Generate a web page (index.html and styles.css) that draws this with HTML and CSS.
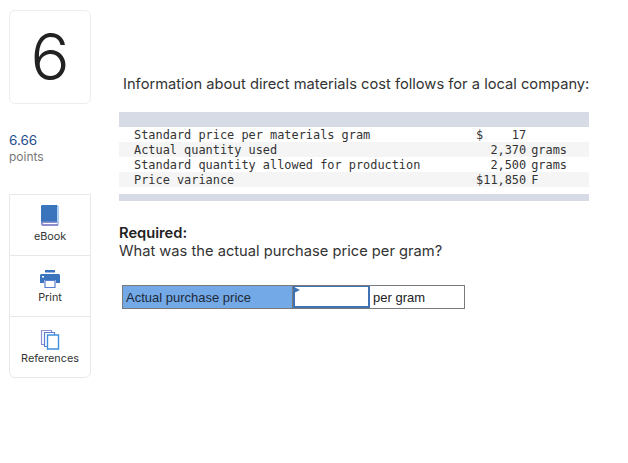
FILE: index.html
```html
<!DOCTYPE html>
<html lang="en">
<head>
  <meta charset="UTF-8" />
  <title>Question 6</title>
  <link rel="stylesheet" href="styles.css">
</head>
<body>
  <div class="page">
    <aside class="sidebar">
      <div class="question-number">6</div>
      <div class="score">
        <div class="score-value">6.66</div>
        <div class="score-label">points</div>
      </div>
      <div class="tools">
        <div class="tool">
          <svg class="tool-icon" width="22" height="24" viewBox="0 0 22 24">
            <path d="M3 2h16v19H3z" fill="#fff" stroke="#5aa5e8" stroke-width="1"/>
            <path d="M2 2.500C2 1.500 2.500 1 3.500 1H18v17H4c-1.200 0-2 .4-2 1z" fill="#3a74bd"/>
            <path d="M2 19c0-1 .8-1.500 2-1.500h14.500V19H4.500c-.8 0-.8 1 0 1H19v2H4c-1.300 0-2-1-2-2z" fill="#8f8fd0"/>
          </svg>
          <span>eBook</span>
        </div>
        <div class="tool">
          <svg class="tool-icon" width="22" height="20" viewBox="0 0 22 20">
            <path d="M6 1h10v2.500H6z" fill="#3a74bd"/>
            <path d="M2.500 5h17c.8 0 1.500.7 1.500 1.500V14h-4v-3H5v3H1V6.500C1 5.700 1.700 5 2.500 5z" fill="#3a74bd"/>
            <path d="M3 7h2v1.500H3z" fill="#fff"/>
            <path d="M6 11.500h10v7H6z" fill="#fff" stroke="#5b7fd0" stroke-width="1.200"/>
          </svg>
          <span>Print</span>
        </div>
        <div class="tool">
          <svg class="tool-icon" width="20" height="21" viewBox="0 0 20 21">
            <path d="M1.500 1.500h10v14h-10z" fill="#fff" stroke="#8f8fd0" stroke-width="1.200"/>
            <path d="M4.500 3.500h10v14h-10z" fill="#fff" stroke="#5b7fd0" stroke-width="1.200"/>
            <path d="M7.500 6h11v14h-11z" fill="#fff" stroke="#3f8fdc" stroke-width="1.400"/>
          </svg>
          <span>References</span>
        </div>
      </div>
    </aside>

    <main class="question">
      <p class="intro">Information about direct materials cost follows for a local company:</p>

      <table class="data-table">
        <tr class="band"><td colspan="4"></td></tr>
        <tr><td class="item">Standard price per materials gram</td><td class="cur">$</td><td class="num">17</td><td class="unit"></td></tr>
        <tr class="alt"><td class="item">Actual quantity used</td><td class="cur"></td><td class="num">2,370</td><td class="unit">grams</td></tr>
        <tr><td class="item">Standard quantity allowed for production</td><td class="cur"></td><td class="num">2,500</td><td class="unit">grams</td></tr>
        <tr class="alt"><td class="item">Price variance</td><td class="cur">$</td><td class="num">11,850</td><td class="unit">F</td></tr>
        <tr class="gap"><td colspan="4"></td></tr>
        <tr class="band-thin"><td colspan="4"></td></tr>
      </table>

      <div class="required">
        <strong>Required:</strong>
        <div>What was the actual purchase price per gram?</div>
      </div>

      <div class="answer">
        <div class="answer-label">Actual purchase price</div>
        <div class="answer-input"><span class="flag"></span></div>
        <div class="answer-unit">per gram</div>
      </div>
    </main>
  </div>
</body>
</html>
```

FILE: styles.css
```css
* {
  box-sizing: border-box;
}
body {
  margin: 0;
  background: #fff;
  color: #2b2b2b;
  font-family: 'Inter', sans-serif;
}
.page {
  display: flex;
  padding: 10px 0 0 9px;
}
.sidebar {
  width: 82px;
  flex: none;
}
.question-number {
  height: 94px;
  padding-bottom: 2px;
  border: 1px solid #ededed;
  border-radius: 6px;
  display: flex;
  align-items: center;
  justify-content: center;
  font-size: 65px;
  font-weight: 300;
  line-height: 1;
  color: #222;
}
.score {
  margin-top: 27px;
  height: 63px;
}
.score-value {
  font-size: 13.500px;
  line-height: 18px;
  color: #1f4e8c;
}
.score-label {
  font-size: 12px;
  line-height: 15px;
  color: #777;
}
.tools {
  border: 1px solid #e8e8e8;
  border-radius: 0 0 6px 6px;
  height: 184px;
}
.tool {
  height: 61px;
  display: flex;
  flex-direction: column;
  align-items: center;
  justify-content: flex-end;
  padding-bottom: 11px;
  font-size: 10.800px;
  line-height: 14px;
  color: #333;
  border-bottom: 1px solid #e8e8e8;
}
.tool:last-child {
  border-bottom: 0;
  padding-bottom: 12px;
}
.tool-icon {
  display: block;
  margin-bottom: 2px;
}
.question {
  width: 470px;
  margin-left: 28px;
  padding-top: 64px;
}
.intro {
  margin: 0 0 18px 4px;
  font-size: 14.700px;
  line-height: 20px;
  color: #333;
  white-space: nowrap;
}
.data-table {
  width: 470px;
  border-collapse: collapse;
  font-family: 'DejaVu Sans Mono', monospace;
  font-size: 11.900px;
  color: #333;
}
.data-table td {
  padding: 2px 0 0;
  height: 15px;
  line-height: 13px;
  white-space: nowrap;
}
.band td {
  background: #d7dbe6;
}
.alt td {
  background: #f5f5f5;
}
.gap td {
  height: 7px;
  padding: 0;
}
.band-thin td {
  height: 7px;
  padding: 0;
  background: #d7dbe6;
}
.item {
  padding-left: 15px !important;
  width: 357px;
}
.cur {
  width: 7px;
}
.num {
  width: 43px;
  text-align: right;
}
.unit {
  padding-left: 5px !important;
}
.required {
  margin-top: 23px;
  font-size: 14.700px;
  line-height: 18px;
  color: #333;
}
.required strong {
  display: block;
  font-weight: 600;
  color: #222;
}
.answer {
  display: flex;
  width: 343px;
  height: 24px;
  margin: 25px 0 0 3px;
  border: 1px solid #7a7a7a;
  font-family: 'Liberation Sans', sans-serif;
  font-size: 13px;
  line-height: 24px;
}
.answer-label {
  width: 170px;
  padding-left: 3px;
  background: #72a9e6;
  border-right: 1px solid #7a7a7a;
  color: #1f2a3a;
}
.answer-input {
  position: relative;
  width: 77px;
  border: 2px solid #3f73b3;
  border-top-width: 1px;
  background: #fff;
}
.flag {
  position: absolute;
  left: -1px;
  top: 0;
  border-left: 6px solid #3f73b3;
  border-top: 3px solid transparent;
  border-bottom: 3px solid transparent;
}
.answer-unit {
  padding-left: 3px;
  color: #222;
}
```
